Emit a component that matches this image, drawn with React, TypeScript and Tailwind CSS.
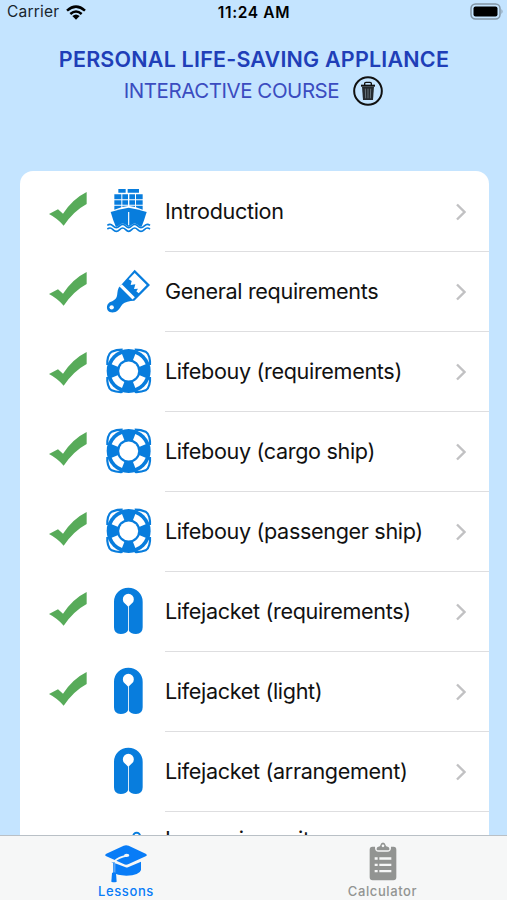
type IconName = 'ship' | 'brush' | 'buoy' | 'jacket' | 'suit';

interface Lesson {
  title: string;
  icon: IconName;
  done?: boolean;
}

const LESSONS: Lesson[] = [
  { title: 'Introduction', icon: 'ship', done: true },
  { title: 'General requirements', icon: 'brush', done: true },
  { title: 'Lifebouy (requirements)', icon: 'buoy', done: true },
  { title: 'Lifebouy (cargo ship)', icon: 'buoy', done: true },
  { title: 'Lifebouy (passenger ship)', icon: 'buoy', done: true },
  { title: 'Lifejacket (requirements)', icon: 'jacket', done: true },
  { title: 'Lifejacket (light)', icon: 'jacket', done: true },
  { title: 'Lifejacket (arrangement)', icon: 'jacket' },
];

function Ship() {
  return (
    <>
      <path d="M43 6h22v11H43zM71 6h34v11H71zM31 22h21v15H31zM55 22h17v15H55zM76 22h17v15H76zM96 22h20v15H96zM31 40h21v13H31zM55 40h17v13H55zM76 40h17v13H76zM96 40h20v13H96z" />
      <path d="M31 56h21v5l-21 7zM116 56H96v5l20 7zM55 56h17v1l-17 3zM93 56H76v1l17 3z" />
      <path d="M20 75Q47 66 74 62Q101 66 128 75Q122 96 111 124H37Q26 96 20 75Z" />
      <path d="M74 75v40" stroke="#fff" strokeWidth="3.5" />
      <path
        d="M10 116Q14 113 18 113C26 113 28 123 37 123S48 113 56 113S66 123 74 123S84 113 92 113S102 123 111 123S122 113 130 113Q134 113 138 116V140H10Z"
        fill="#fff"
        stroke="#fff"
        strokeWidth="7"
      />
      <path
        d="M10 115Q14 112 18 112C26 112 28 122 37 122S48 112 56 112S66 122 74 122S84 112 92 112S102 122 111 122S122 112 130 112Q134 112 138 115M10 126Q14 123 18 123C26 123 28 133 37 133S48 123 56 123S66 133 74 133S84 123 92 123S102 133 111 133S122 123 130 123Q134 123 138 126"
        fill="none"
        stroke="currentColor"
        strokeWidth="5"
      />
    </>
  );
}

function Brush() {
  return (
    <>
      <path d="M92 8L138 54L91 101L80 102Q70 104 62 107C53 111 50 121 42 130C33 139 17 139 11 130C6 120 10 109 19 105C27 102 35 98 38 90C41 81 39 73 44 62Z" />
      <path d="M92 18L128 54L104 79L97 73L102 65L90 66L94 52L80 54L83 42L74 37Z" fill="#fff" />
      <path d="M50 55L89 94" stroke="#fff" strokeWidth="10" />
      <circle cx="23" cy="121" r="6.5" fill="#fff" />
    </>
  );
}

function Buoy() {
  return (
    <>
      <path
        d="M56 8Q36 8 23 14Q15 19 12 31Q9 43 10 54M92 8Q112 8 125 14Q133 19 136 31Q139 43 138 54M56 135Q36 136 23 130Q15 125 12 113Q9 101 10 90M92 135Q112 136 125 130Q133 125 136 113Q139 101 138 90"
        fill="none"
        stroke="currentColor"
        strokeWidth="6.5"
      />
      <circle cx="74" cy="72" r="66" />
      <path
        d="M94 21A55 55 0 0 1 125 52L107 59A36 36 0 0 0 87 39ZM125 92A55 55 0 0 1 94 123L87 105A36 36 0 0 0 107 85ZM54 123A55 55 0 0 1 23 92L41 85A36 36 0 0 0 61 105ZM23 52A55 55 0 0 1 54 21L61 39A36 36 0 0 0 41 59Z"
        fill="#fff"
      />
      <circle cx="74" cy="72" r="28.5" fill="#fff" />
    </>
  );
}

function Jacket() {
  return (
    <>
      <path d="M30 44a43 42 0 0 1 86 0v77q0 20-20 20q-17 0-23-13q-6 13-23 13q-20 0-20-20z" />
      <path d="M73 60Q69 55 62 49A16.500 16.500 0 1 1 84 49Q77 55 73 60Z" fill="#fff" />
      <path d="M73.500 58v84" stroke="#fff" strokeWidth="2.5" />
    </>
  );
}

function Suit() {
  return (
    <>
      <path d="M88 32V27a10 10 0 0 1 20 0V32" fill="none" stroke="currentColor" strokeWidth="6" />
      <path d="M62 46Q74 35 90 33h18Q124 35 134 46L126 134H70Z" />
    </>
  );
}

const ICONS = { ship: Ship, brush: Brush, buoy: Buoy, jacket: Jacket, suit: Suit };

function LessonIcon({ name }: { name: IconName }) {
  const Icon = ICONS[name];
  return (
    <svg viewBox="0 0 144 144" className="ml-[17px] mt-4 size-12 shrink-0 text-[#087ddd]" fill="currentColor">
      <Icon />
    </svg>
  );
}

function LessonRow({ title, icon, done }: Lesson) {
  return (
    <li className="flex h-20 shrink-0 pl-[29px]">
      <div className="w-[38px] pt-[21px]">
        {done && (
          <svg viewBox="0 0 114 102" className="h-[34px] w-[38px]" fill="#57ab59">
            <path d="M0 66L27 52L42 65Q72 20 113 0V36Q74 57 44 101Q25 79 0 66Z" />
          </svg>
        )}
      </div>
      <LessonIcon name={icon} />
      <div className="relative top-px ml-[13px] flex flex-1 items-center justify-between border-b-[1.5px] border-[#dedee0] pr-[23px]">
        <span className="whitespace-nowrap text-[21.6px] tracking-[-0.34px] text-[#111]">{title}</span>
        <svg viewBox="0 0 10 18" className="h-[18px] w-2.5" fill="none" stroke="#c1c1c3" strokeWidth="2.4">
          <path d="M1 1.500L8.500 9L1 16.500" />
        </svg>
      </div>
    </li>
  );
}

function StatusBar() {
  return (
    <div className="flex h-6 items-center justify-between pl-[7px] pr-[3px] text-black">
      <div className="flex w-20 items-center gap-[7px]">
        <span className="text-[15.5px] tracking-[0.2px] text-[#18242e]">Carrier</span>
        <svg viewBox="0 0 60 45" className="h-[15px] w-5 shrink-0" fill="none" stroke="currentColor" strokeWidth="7.500">
          <path d="M3 17Q30-7 57 17M13 27Q30 12 47 27" />
          <path d="M19 33Q30 24 41 33L30 44Z" fill="currentColor" stroke="none" />
        </svg>
      </div>
      <span className="whitespace-nowrap pl-px pt-px text-[15.5px] font-semibold tracking-[0.65px]">11:24 AM</span>
      <div className="flex w-[84px] justify-end">
        <svg viewBox="0 0 34 18" className="h-[18px] w-[34px]">
          <rect x="1" y="1" width="29" height="15" rx="4.500" fill="none" stroke="#8295a5" strokeWidth="1.500" />
          <rect x="3.500" y="3.500" width="24" height="10" rx="2" fill="#000" />
          <path d="M31.500 6v5q2-2.500 0-5z" fill="#8295a5" />
        </svg>
      </div>
    </div>
  );
}

function TrashButton() {
  return (
    <button aria-label="Reset progress">
      <svg viewBox="0 0 90 90" className="size-[30px]" fill="none" stroke="#111">
        <circle cx="45" cy="45" r="41.500" strokeWidth="6" />
        <path d="M24 29h42" strokeWidth="6" />
        <path d="M35 28v-6q0-3 4-3h12q4 0 4 3v6" strokeWidth="4" />
        <path d="M27 32h36l-3 40H30z" fill="#24292e" stroke="none" />
        <path d="M37 38l1 29M45 38v29M53 38l-1 29" stroke="#75828c" strokeWidth="2.500" />
      </svg>
    </button>
  );
}

function TabBar() {
  return (
    <nav className="flex h-[65px] shrink-0 border-t-[1.5px] border-[#b9c0c6] bg-[#f6f7f7] text-[13px] font-medium">
      <button className="flex w-[252px] shrink-0 flex-col items-center pt-[9px] text-[#087cf7]">
        <svg viewBox="0 0 126 114" className="h-[38px] w-[42px] shrink-0" fill="currentColor">
          <path d="M18 50L62 67Q65 68 69 67L108 50V75Q104 91 64 92Q35 92 26 82L25 55Z" />
          <path
            d="M4 26L56 2Q63 0 71 2L122 26Q129 30 122 34L71 57Q63 61 56 57L4 34Q-3 30 4 26Z"
            stroke="#f6f7f7"
            strokeWidth="8"
            paintOrder="stroke"
          />
          <path d="M66 32Q40 37 28 49V85" fill="none" stroke="#f6f7f7" strokeWidth="5" />
          <ellipse cx="65" cy="31" rx="8" ry="5" fill="#f6f7f7" />
          <path d="M27 52V84" fill="none" stroke="currentColor" strokeWidth="4" />
          <path d="M21 84q6-4 12 0l2 26q-8 4-16 0z" />
        </svg>
        <span className="leading-4 tracking-[0.6px]">Lessons</span>
      </button>
      <button className="flex flex-1 flex-col items-center pl-[6px] pt-[6px] text-[#929492]">
        <svg viewBox="0 0 84 116" className="h-[39px] w-7 shrink-0" fill="currentColor">
          <path d="M10 14h8q-1 15 11 15h26q12 0 11-15h8q8 0 8 9v82q0 9-9 9H11q-9 0-9-9V23q0-9 8-9Z" />
          <path fillRule="evenodd" d="M23 22v-3q0-5 7-6q3 0 4-4q2-8 8-8t8 8q1 4 4 4q7 1 7 6v3q0 2-3 2H26q-3 0-3-2ZM38 11a4 4 0 1 0 8 0a4 4 0 1 0-8 0Z" />
          <path d="M17 49h9M31 49h36M17 68h9M31 68h36M17 87h9M31 87h36" stroke="#f6f7f7" strokeWidth="7" />
        </svg>
        <span className="mt-[2px] leading-4 tracking-[0.6px]">Calculator</span>
      </button>
    </nav>
  );
}

export default function App() {
  return (
    <div className="flex h-[900px] w-[507px] flex-col overflow-hidden bg-[#c4e4ff] font-[Inter,'Liberation_Sans',sans-serif]">
      <StatusBar />
      <header className="flex h-[147px] shrink-0 flex-col items-center pt-[19px] text-[#203eb8]">
        <h1 className="whitespace-nowrap pl-px text-[21.5px] font-semibold leading-8 tracking-[0.2px]">PERSONAL LIFE-SAVING APPLIANCE</h1>
        <div className="mt-px flex items-center gap-[14px]">
          <span className="whitespace-nowrap text-[20.5px] tracking-[-0.46px] text-[#3b4cc0]">INTERACTIVE COURSE</span>
          <TrashButton />
        </div>
      </header>
      <main className="min-h-0 flex-1 overflow-hidden pl-5 pr-[18px]">
        <ul className="flex flex-col rounded-t-[13px] bg-white">
          {LESSONS.map((lesson) => (
            <LessonRow key={lesson.title} {...lesson} />
          ))}
          {/* Taller row: the title sits near its top edge */}
          <li className="flex h-24 shrink-0 items-start pl-[67px]">
            <LessonIcon name="suit" />
            <span className="ml-[13px] mt-[12px] whitespace-nowrap text-[21.6px] tracking-[-0.32px] text-[#111]">Immersion suit</span>
          </li>
        </ul>
      </main>
      <TabBar />
    </div>
  );
}
